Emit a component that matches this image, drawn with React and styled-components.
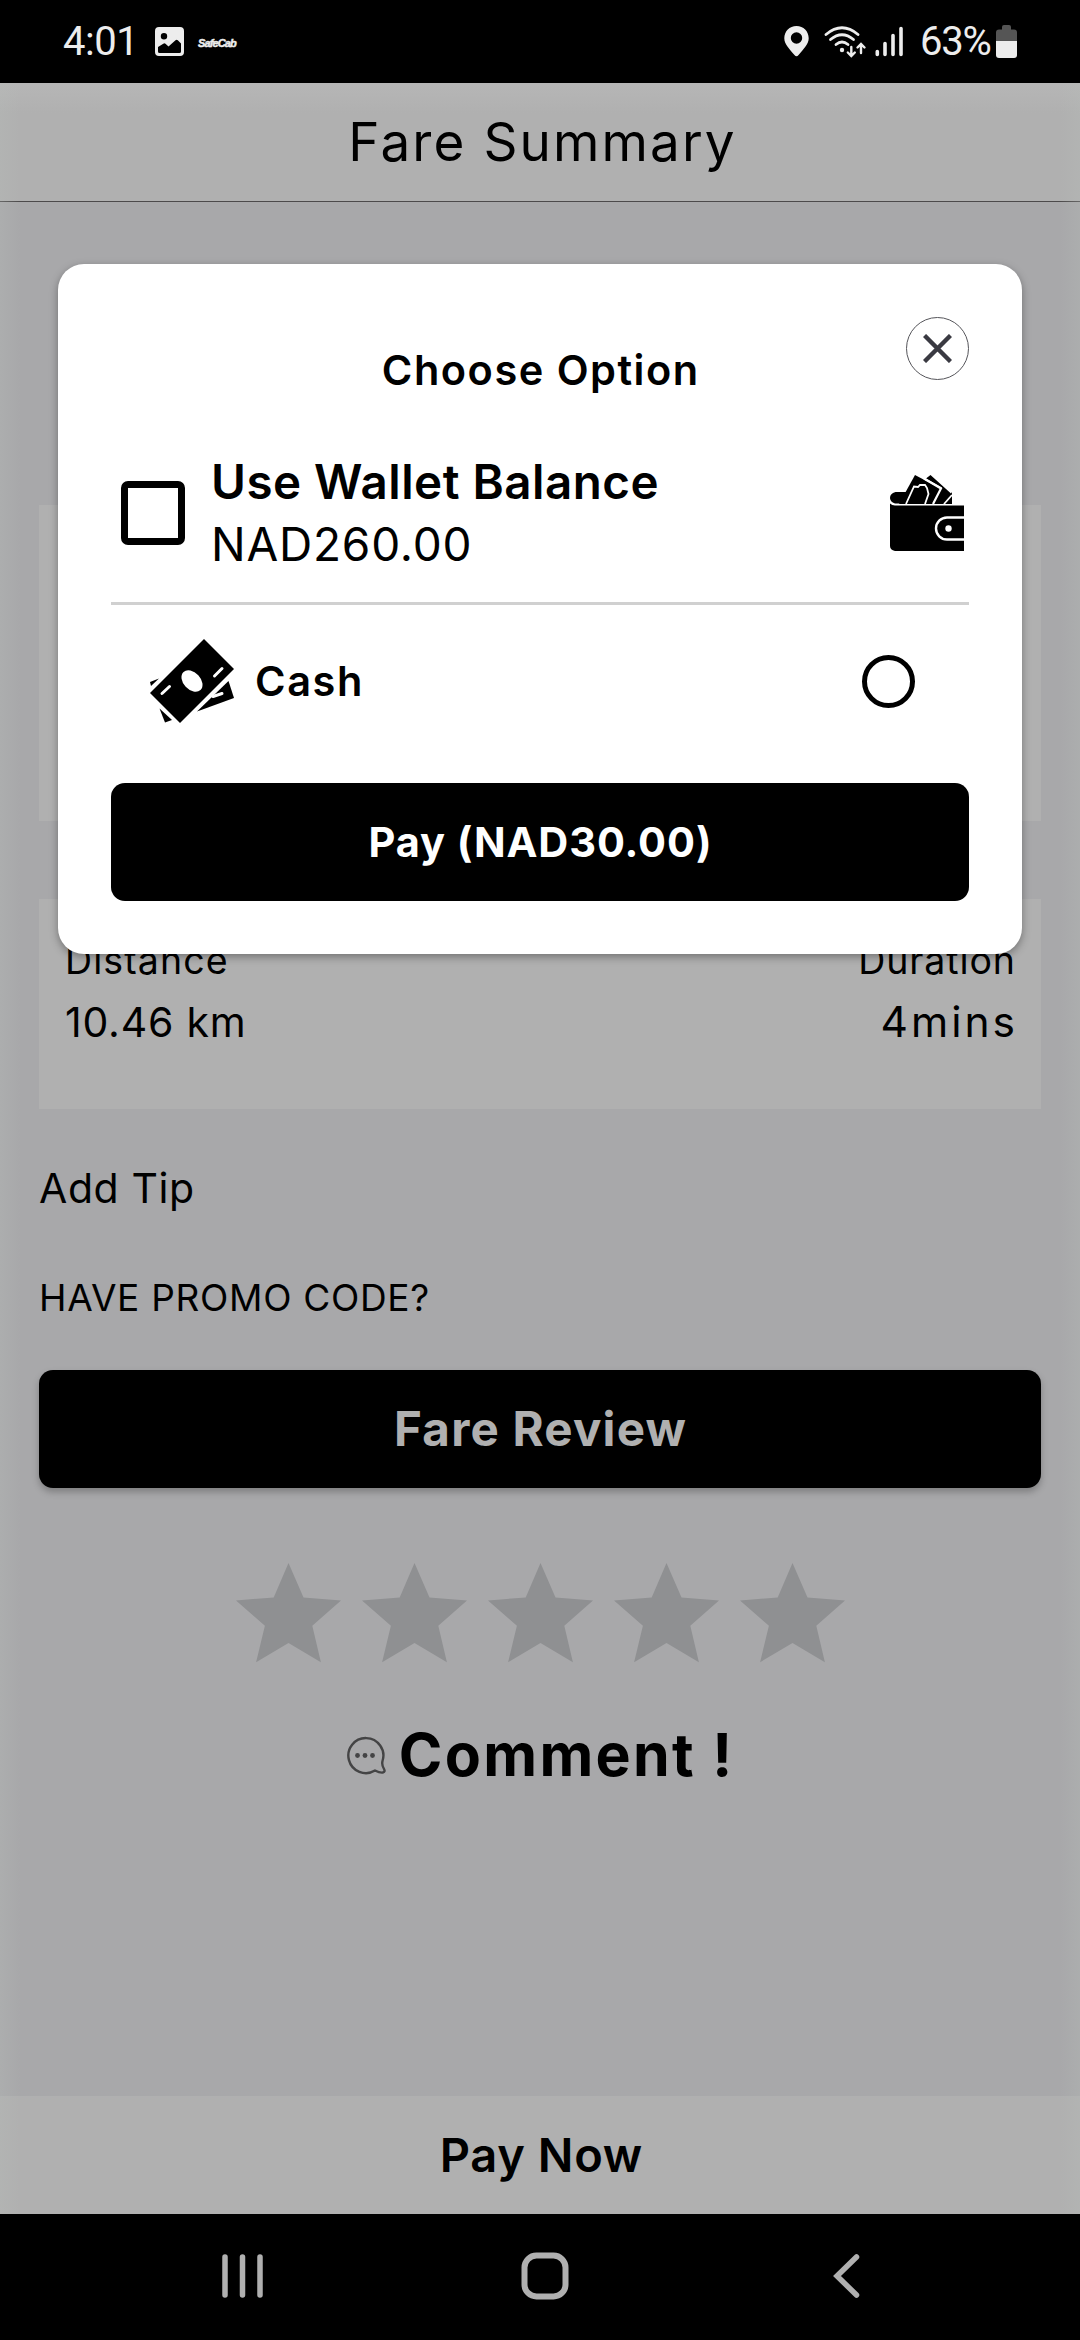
import { useState } from 'react';
import styled, { createGlobalStyle } from 'styled-components';

const GlobalStyle = createGlobalStyle`
  * {
    box-sizing: border-box;
  }
  body {
    margin: 0;
    background: #000;
    font-family: Inter, 'Liberation Sans', sans-serif;
  }
  button {
    font-family: inherit;
    border: none;
    padding: 0;
    background: none;
  }
`;

const Screen = styled.div`
  position: relative;
  display: flex;
  flex-direction: column;
  width: 1080px;
  height: 2340px;
  overflow: hidden;
`;

const StatusBar = styled.div`
  display: flex;
  align-items: center;
  height: 83px;
  padding: 0 63px 0 63px;
  background: #000;
  color: #ededed;
  font-family: Roboto, sans-serif;
  font-size: 40px;
  line-height: 80px;
`;

const Clock = styled.span`
  width: 92px;
  letter-spacing: -0.5px;
`;

const AppBadge = styled.span`
  margin-left: 14px;
  padding-top: 3px;
  font-family: 'Liberation Sans', sans-serif;
  font-size: 11px;
  font-weight: 700;
  font-style: italic;
  letter-spacing: -0.9px;
  -webkit-text-stroke: 0.5px #ededed;
`;

const StatusRight = styled.div`
  display: flex;
  align-items: center;
  margin-left: auto;
`;

const Percent = styled.span`
  width: 76px;
  letter-spacing: -1.2px;
`;

const AppArea = styled.div`
  display: flex;
  flex-direction: column;
  height: 2131px;
  background: #a8a8aa;
`;

const Text = styled.span`
  display: block;
  color: ${({ $color }) => $color || '#000'};
  font-size: ${({ $size }) => $size}px;
  font-weight: ${({ $weight }) => $weight || 400};
  line-height: ${({ $line }) => $line || 50}px;
  letter-spacing: ${({ $gap }) => $gap || 0}px;
  margin-right: ${({ $gap }) => -($gap || 0)}px;
  white-space: nowrap;
`;

const Header = styled.header`
  display: flex;
  align-items: center;
  justify-content: center;
  height: 119px;
  padding-left: 3px;
  background: #b0b0b0;
  border-bottom: 1px solid #4c4a4b;
`;

const Content = styled.main`
  display: flex;
  flex-direction: column;
  flex: 1;
  padding: 303px 39px 0;
`;

const FareCard = styled.section`
  height: 316px;
  margin-bottom: 78px;
  background: #b0b0b0;
`;

const TripCard = styled.section`
  display: flex;
  justify-content: space-between;
  height: 210px;
  margin-bottom: 54px;
  padding: 36px 26px 0 26px;
  background: #b0b0b0;
`;

const TripInfo = styled.div`
  display: flex;
  flex-direction: column;
  align-items: ${({ $end }) => ($end ? 'flex-end' : 'flex-start')};
`;

const Extras = styled.div`
  display: flex;
  flex-direction: column;
  gap: 60px;
  margin-bottom: 47px;
`;

const BlackButton = styled.button`
  display: flex;
  align-items: center;
  justify-content: center;
  width: 100%;
  height: 118px;
  border-radius: 14px;
  background: #000;
  box-shadow: ${({ $raised }) => ($raised ? '0 4px 7px rgba(0, 0, 0, 0.25)' : 'none')};
`;

const Stars = styled.div`
  display: flex;
  justify-content: center;
  gap: 21px;
  height: 100px;
  margin: 75px 0 57px;
`;

const CommentRow = styled.div`
  display: flex;
  align-items: center;
  justify-content: center;
  gap: 13px;
  height: 70px;
  padding-right: 1px;
`;

const PayNowBar = styled.button`
  display: flex;
  align-items: center;
  justify-content: center;
  height: 118px;
  padding-left: 2px;
  background: #b0b0b0;
`;

const NavBar = styled.nav`
  display: flex;
  align-items: center;
  justify-content: space-between;
  height: 126px;
  padding: 0 220px 2px 221px;
  background: #000;
`;

const EdgeGlow = styled.div`
  position: absolute;
  top: 83px;
  left: 0;
  right: 0;
  height: 2131px;
  pointer-events: none;
  background:
    linear-gradient(to right, rgba(184, 190, 186, 0.25), rgba(184, 190, 186, 0) 20px),
    linear-gradient(to left, rgba(184, 190, 186, 0.25), rgba(184, 190, 186, 0) 20px),
    linear-gradient(to bottom, rgba(190, 190, 190, 0.45), rgba(190, 190, 190, 0) 30px);
`;

const Modal = styled.div`
  position: absolute;
  top: 264px;
  left: 58px;
  width: 964px;
  height: 690px;
  padding: 53px;
  border-radius: 26px;
  background: #fff;
  box-shadow: 0 3px 8px rgba(0, 0, 0, 0.35);
`;

const ModalHeader = styled.div`
  display: grid;
  grid-template-columns: 63px 1fr 63px;
  justify-items: center;
  height: 78px;
`;

const ModalTitle = styled.div`
  grid-column: 2;
  padding-top: 28px;
`;

const CloseButton = styled.button`
  display: flex;
  align-items: center;
  justify-content: center;
  width: 63px;
  height: 63px;
  border: 1px solid #55555a;
  border-radius: 50%;
`;

const WalletRow = styled.div`
  display: flex;
  align-items: center;
  height: 210px;
  padding: 56px 5px 27px 10px;
  border-bottom: 3px solid #d0d0d0;
`;

const Checkbox = styled.button`
  width: 64px;
  height: 64px;
  margin-right: 26px;
  border: 7px solid #000;
  border-radius: 7px;
  background: ${({ $checked }) => ($checked ? '#000' : '#fff')};
`;

const RowEnd = styled.div`
  display: flex;
  margin-left: auto;
`;

const CashRow = styled.div`
  display: flex;
  align-items: center;
  height: 152px;
  margin-bottom: 26px;
  padding: 0 54px 0 39px;
  gap: 21px;
`;

const Radio = styled.button`
  width: 53px;
  height: 53px;
  border: 5.5px solid #000;
  border-radius: 50%;
  background: ${({ $checked }) => ($checked ? '#000' : '#fff')};
  box-shadow: inset 0 0 0 9px #fff;
`;

const ImageIcon = () => (
  <svg width="29" height="29" viewBox="0 0 29 29">
    <path
      fill="#ededed"
      fillRule="evenodd"
      d="M4 0H25a4 4 0 0 1 4 4V25a4 4 0 0 1-4 4H4a4 4 0 0 1-4-4V4a4 4 0 0 1 4-4ZM9 6a3.2 3.2 0 1 0 0 6.400a3.200 3.200 0 0 0 0-6.400ZM3 20V24.500a1.500 1.500 0 0 0 1.500 1.500H24.500a1.500 1.500 0 0 0 1.500-1.500V16.500L22.800 13.300a1.600 1.600 0 0 0-2.300 0L13.500 19.500L10.500 16.800a1.600 1.600 0 0 0-2.200 0Z"
    />
  </svg>
);

const StatusIcons = () => (
  <svg width="136" height="34" viewBox="784 25 136 34" fill="none" stroke="#ededed">
    <path
      fill="#ededed"
      stroke="none"
      fillRule="evenodd"
      d="M796.500 26c7 0 12.200 5.300 12.200 12.200c0 5.800-5 10.500-10.400 17.100a2.300 2.300 0 0 1-3.600 0C789.300 48.700 784.300 44 784.300 38.200C784.300 31.300 789.500 26 796.500 26ZM796.500 32.300a5.700 5.700 0 1 0 0 11.400a5.700 5.700 0 0 0 0-11.400Z"
    />
    <g strokeWidth="2.800" strokeLinecap="round">
      <path d="M826 34.500Q842 21 858 34.500" />
      <path d="M830.500 39.500Q842 30 853.500 39.500" />
      <path d="M836 44.500Q842 39.500 848 44.500" />
      <path d="M851.300 47V55.500M847.800 52.500L851.300 56L854.800 52.500" strokeWidth="2.400" />
      <path d="M861 53V44.500M857.500 47.500L861 44L864.500 47.500" strokeWidth="2.400" />
      <g strokeWidth="3.600">
        <path d="M877.300 51.500V54.500M885 43.500V54.500M893 35.500V54.500M901 28.500V54.500" />
      </g>
    </g>
    <circle cx="842" cy="50" r="2.200" fill="#ededed" stroke="none" />
  </svg>
);

const BatteryIcon = () => (
  <svg width="21" height="33" viewBox="0 0 21 33">
    <path fill="#555" d="M8 0h5a2 2 0 0 1 2 2v2.500h3a3 3 0 0 1 3 3V16H0V7.500a3 3 0 0 1 3-3h3V2a2 2 0 0 1 2-2Z" />
    <path fill="#ededed" d="M0 16H21V30a3 3 0 0 1-3 3H3a3 3 0 0 1-3-3Z" />
  </svg>
);

const CloseIcon = () => (
  <svg width="29" height="29" viewBox="0 0 29 29" stroke="#3a3a42" strokeWidth="4.400">
    <path d="M1.500 1.500L27.500 27.500M27.500 1.500L1.500 27.500" />
  </svg>
);

const WalletIcon = () => (
  <svg width="74" height="76" viewBox="0 0 74 76" fill="#000">
    <path d="M36 3.500L40.500 0L61 18.500L62 17V29H42L52 12.500Z" />
    <path d="M7 17H17L10 28.500H5C1.500 27.500 0 25 0 23C0 19.500 3 17 7 17Z" />
    <path d="M25 0L50.500 13.500L43 29H9Z" />
    <g fill="none" stroke="#fff" strokeWidth="1.800">
      <path d="M16 29L24 11.500L28 12L30 9.800L35 10L37 13L38.500 19L35 29" />
      <path d="M34 3.500L51 13.500L43 29" strokeWidth="2.200" />
      <path d="M54 29L62 20" />
    </g>
    <path d="M0 28.500Q2 30.500 5 30.500H74V76H5Q0 75 0 71Z" />
    <path d="M74 42.500H57a11 11 0 0 0 0 22H74" fill="none" stroke="#fff" strokeWidth="2.400" />
    <circle cx="58.500" cy="53.500" r="3.200" fill="#fff" />
  </svg>
);

const CashIcon = () => (
  <svg width="84" height="84" viewBox="0 0 84 84" fill="#000">
    <path d="M0 43L9 39.500L1 47Z" />
    <path d="M9.500 69.500L22 81L15 83.500Z" />
    <path d="M47 72.500L78.500 42L84 59Z" />
    <path d="M54 0L84 30L30 84L0 54Z" />
    <ellipse cx="42" cy="42" rx="8.600" ry="12.400" transform="rotate(-43 42 42)" fill="#fff" />
    <path
      d="M12 54.500L19.500 47.500M64.500 37L72 29.500M63 57.500L72 54.500"
      stroke="#fff"
      strokeWidth="3"
      strokeLinecap="round"
    />
  </svg>
);

const StarIcon = () => (
  <svg width="105" height="100" viewBox="0 0 105 100" fill="#8f9092">
    <path d="M52.500 0L67.500 34.400L105 37.500L76.300 62.700L84.900 99.200L52.500 79.900L20.100 99.200L28.900 62.700L0 37.500L37.700 34.400Z" />
  </svg>
);

const CommentIcon = () => (
  <svg width="39" height="39" viewBox="0 0 39 39" fill="none" stroke="#444445" strokeWidth="2.400">
    <path d="M35.500 25A17.500 17.500 0 1 0 28 34.500Q33 37 36 36.500Q38.500 35.500 37 33Q34.500 29 35.500 25Z" />
    <g fill="#444445" stroke="none">
      <circle cx="10.500" cy="19.500" r="2.400" />
      <circle cx="18" cy="19.500" r="2.400" />
      <circle cx="25.500" cy="19.500" r="2.400" />
    </g>
  </svg>
);

const RecentsIcon = () => (
  <svg width="43" height="44" viewBox="0 0 43 44" stroke="#b0b0b0" strokeWidth="5.500" strokeLinecap="round">
    <path d="M4 3V41M21.500 3V41M39 3V41" />
  </svg>
);

const HomeButton = styled.button`
  display: flex;
  margin-right: 8px;
`;

const HomeIcon = () => (
  <svg width="48" height="48" viewBox="0 0 48 48" fill="none" stroke="#b0b0b0" strokeWidth="6">
    <rect x="3.500" y="3.500" width="41" height="41" rx="12" />
  </svg>
);

const BackIcon = () => (
  <svg width="27" height="44" viewBox="0 0 27 44" fill="none" stroke="#b0b0b0" strokeWidth="5.500" strokeLinecap="round">
    <path d="M23.500 3L4 22L23.500 41" />
  </svg>
);

const App = () => {
  const [useWallet, setUseWallet] = useState(false);
  const [cash, setCash] = useState(false);

  return (
    <>
      <GlobalStyle />
      <Screen>
        <StatusBar>
          <Clock>4:01</Clock>
          <ImageIcon />
          <AppBadge>SafeCab</AppBadge>
          <StatusRight>
            <StatusIcons />
            <Percent>63%</Percent>
            <BatteryIcon />
          </StatusRight>
        </StatusBar>
        <AppArea>
          <Header>
            <Text $size={53} $gap={2.1}>Fare Summary</Text>
          </Header>
          <Content>
            <FareCard />
            <TripCard>
              <TripInfo>
                <Text $size={37.5} $gap={1.1} $line={52}>Distance</Text>
                <Text $size={41} $gap={0.8} $line={70}>10.46 km</Text>
              </TripInfo>
              <TripInfo $end>
                <Text $size={37.5} $gap={0.9} $line={52}>Duration</Text>
                <Text $size={42.5} $gap={3} $line={70}>4mins</Text>
              </TripInfo>
            </TripCard>
            <Extras>
              <Text $size={41} $gap={0.6}>Add Tip</Text>
              <Text $size={37} $gap={0.7}>HAVE PROMO CODE?</Text>
            </Extras>
            <BlackButton $raised>
              <Text $size={47.5} $weight={700} $gap={1.2} $color="#b0b0b0">Fare Review</Text>
            </BlackButton>
            <Stars>
              {[1, 2, 3, 4, 5].map(star => (
                <StarIcon key={star} />
              ))}
            </Stars>
            <CommentRow>
              <CommentIcon />
              <Text $size={59} $weight={700} $gap={2.3} $line={70}>Comment !</Text>
            </CommentRow>
          </Content>
          <PayNowBar>
            <Text $size={47} $weight={600} $gap={0.6}>Pay Now</Text>
          </PayNowBar>
        </AppArea>
        <NavBar>
          <RecentsIcon />
          <HomeButton>
            <HomeIcon />
          </HomeButton>
          <BackIcon />
        </NavBar>
        <EdgeGlow />
        <Modal>
          <ModalHeader>
            <ModalTitle>
              <Text $size={41.5} $weight={600} $gap={1.5}>Choose Option</Text>
            </ModalTitle>
            <CloseButton>
              <CloseIcon />
            </CloseButton>
          </ModalHeader>
          <WalletRow>
            <Checkbox $checked={useWallet} onClick={() => setUseWallet(!useWallet)} />
            <div>
              <Text $size={47.5} $weight={600} $gap={0.5} $line={62}>Use Wallet Balance</Text>
              <Text $size={46} $gap={0.8} $line={62}>NAD260.00</Text>
            </div>
            <RowEnd>
              <WalletIcon />
            </RowEnd>
          </WalletRow>
          <CashRow>
            <CashIcon />
            <Text $size={41.5} $weight={600} $gap={1.6}>Cash</Text>
            <RowEnd>
              <Radio $checked={cash} onClick={() => setCash(!cash)} />
            </RowEnd>
          </CashRow>
          <BlackButton>
            <Text $size={41.5} $weight={700} $gap={0.9} $color="#fff">Pay (NAD30.00)</Text>
          </BlackButton>
        </Modal>
      </Screen>
    </>
  );
};

export default App;
